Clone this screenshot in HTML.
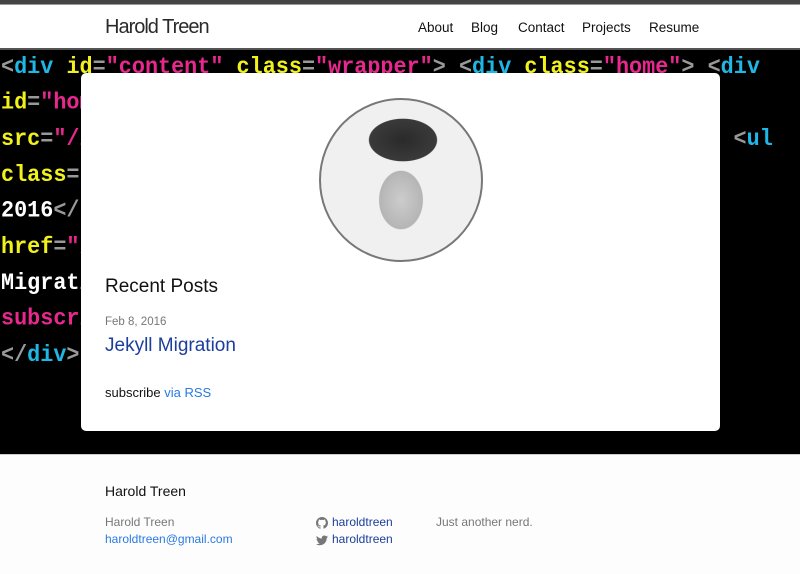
<!DOCTYPE html>
<html><head><meta charset="utf-8"><style>
*{margin:0;padding:0;box-sizing:border-box}
body{width:800px;height:574px;overflow:hidden;background:#fdfdfd;font-family:"Liberation Sans",sans-serif;position:relative}
.topbar{position:absolute;top:0;left:0;width:800px;height:5px;background:#444;border-bottom:1px solid #999}
.header{position:absolute;top:5px;left:0;width:800px;height:44px;background:#fff}
.logo{position:absolute;left:105px;top:11px;font-size:20px;color:#2a2a2a;letter-spacing:-1px}
.nav{position:absolute;top:15px;font-size:13.5px;color:#111}
.code{position:absolute;top:48px;left:0;width:800px;height:406px;background:#000;border-top:2px solid #555;overflow:hidden}
.code pre{font-family:"Liberation Mono",monospace;font-size:21.8px;line-height:33.33px;color:#fff;font-weight:bold;white-space:pre;position:absolute;left:1px;top:-1px;transform:scaleY(1.08);transform-origin:0 0}
.t{color:#1fb8e6}.a{color:#f1f11c}.s{color:#e8288e}.g{color:#999}
.card{position:absolute;left:81px;top:73px;width:639px;height:358px;background:#fff;border-radius:5px}
.av{position:absolute;left:319px;top:98px;width:164px;height:164px;border-radius:50%;border:2px solid #777;background:radial-gradient(ellipse 36px 48px at 80px 100px,#ccc 0,#b5b5b5 60%,transparent 62%),radial-gradient(ellipse 48px 30px at 82px 40px,#2a2a2a 0,#3a3a3a 70%,transparent 72%),#f0f0f0;overflow:hidden}
.footer{position:absolute;top:454px;left:0;width:800px;height:120px;background:#fdfdfd;border-top:1px solid #ccc}
.f{position:absolute;font-size:12px}
a{text-decoration:none}
</style></head><body>
<div class="topbar"></div>
<div class="header">
<div class="logo">Harold Treen</div>
<div class="nav" style="left:418px">About</div>
<div class="nav" style="left:471px">Blog</div>
<div class="nav" style="left:518px">Contact</div>
<div class="nav" style="left:582px">Projects</div>
<div class="nav" style="left:649px">Resume</div>
</div>
<div class="code"><pre><span class="g">&lt;</span><span class="t">div</span> <span class="a">id</span><span class="g">=</span><span class="s">"content"</span> <span class="a">class</span><span class="g">=</span><span class="s">"wrapper"</span><span class="g">&gt;</span> <span class="g">&lt;</span><span class="t">div</span> <span class="a">class</span><span class="g">=</span><span class="s">"home"</span><span class="g">&gt;</span> <span class="g">&lt;</span><span class="t">div</span>
<span class="a">id</span><span class="g">=</span><span class="s">"home-img"</span>
<span class="a">src</span><span class="g">=</span><span class="s">"/img/me.jpg"</span>                                       <span class="g">&lt;</span><span class="t">ul</span>
<span class="a">class</span><span class="g">=</span><span class="s">"post-list"</span>
2016<span class="g">&lt;/</span><span class="t">span</span>
<span class="a">href</span><span class="g">=</span><span class="s">"/jekyll"</span>
Migration
<span class="s">subscribe</span>                                          <span class="t">p</span><span class="g">&gt;</span>
<span class="g">&lt;/</span><span class="t">div</span><span class="g">&gt;</span></pre></div>
<div class="card">
<div style="position:absolute;left:24px;top:203px;font-size:19px;color:#111">Recent Posts</div>
<div style="position:absolute;left:24px;top:243px;font-size:11.5px;color:#777">Feb 8, 2016</div>
<div style="position:absolute;left:24px;top:262px;font-size:19px;color:#1a3e9a">Jekyll Migration</div>
<div style="position:absolute;left:24px;top:312px;font-size:13px;color:#111">subscribe <span style="color:#2a7ae2">via RSS</span></div>
</div>
<div class="av"></div>
<div class="footer">
<div class="f" style="left:105px;top:28px;font-size:14px;color:#111">Harold Treen</div>
<div class="f" style="left:105px;top:60px;color:#777">Harold Treen</div>
<div class="f" style="left:105px;top:77px;color:#2a7ae2">haroldtreen@gmail.com</div>
<svg class="f" style="left:316px;top:62px" width="12" height="12" viewBox="0 0 16 16"><path fill="#777" d="M8 0C3.6 0 0 3.6 0 8c0 3.5 2.3 6.5 5.5 7.6.4.1.5-.2.5-.4v-1.4c-2.2.5-2.7-1-2.7-1-.4-.9-.9-1.2-.9-1.2-.7-.5.1-.5.1-.5.8.1 1.2.8 1.2.8.7 1.2 1.9.9 2.3.7.1-.5.3-.9.5-1.1-1.8-.2-3.6-.9-3.6-4 0-.9.3-1.6.8-2.1-.1-.2-.4-1 .1-2.1 0 0 .7-.2 2.2.8.6-.2 1.3-.3 2-.3s1.4.1 2 .3c1.5-1 2.2-.8 2.2-.8.4 1.1.2 1.9.1 2.1.5.6.8 1.3.8 2.1 0 3.1-1.9 3.7-3.6 3.9.3.3.5.8.5 1.5v2.2c0 .2.1.5.6.4C13.7 14.5 16 11.5 16 8c0-4.4-3.6-8-8-8z"/></svg>
<div class="f" style="left:332px;top:60px;color:#1a3e9a">haroldtreen</div>
<svg class="f" style="left:316px;top:79px" width="12" height="12" viewBox="0 0 16 16"><path fill="#777" d="M16 3.5c-.6.3-1.2.4-1.9.5.7-.4 1.2-1 1.4-1.8-.6.4-1.3.6-2.1.8-.6-.6-1.5-1-2.4-1-1.8 0-3.3 1.5-3.3 3.3 0 .3 0 .5.1.7C5.1 5.9 2.7 4.6 1.1 2.6c-.3.5-.4 1-.4 1.7 0 1.1.6 2.1 1.5 2.7-.5 0-1-.2-1.5-.4 0 1.6 1.1 2.9 2.6 3.2-.3.1-.6.1-.9.1-.2 0-.4 0-.6-.1.4 1.3 1.6 2.3 3.1 2.3-1.1.9-2.5 1.4-4.1 1.4H0c1.5.9 3.2 1.5 5 1.5 6 0 9.3-5 9.3-9.3v-.4c.7-.5 1.2-1 1.700-1.700z"/></svg>
<div class="f" style="left:332px;top:77px;color:#1a3e9a">haroldtreen</div>
<div class="f" style="left:436px;top:60px;color:#777">Just another nerd.</div>
</div>
</body></html>
